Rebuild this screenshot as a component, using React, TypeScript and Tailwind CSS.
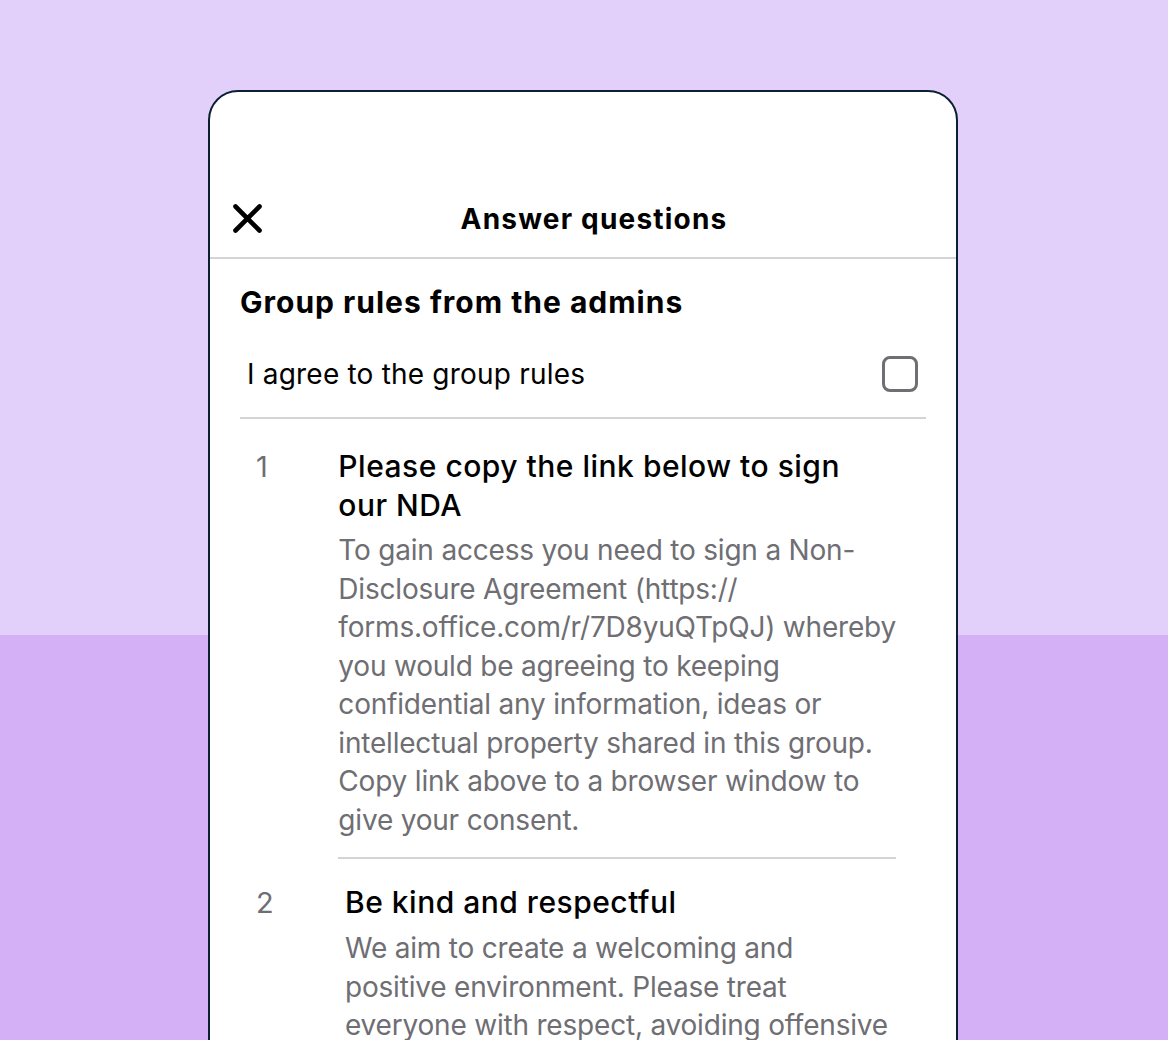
import React from "react";

const desc1 = [
  "To gain access you need to sign a Non-",
  "Disclosure Agreement (https://",
  "forms.office.com/r/7D8yuQTpQJ) whereby",
  "you would be agreeing to keeping",
  "confidential any information, ideas or",
  "intellectual property shared in this group.",
  "Copy link above to a browser window to",
  "give your consent.",
];

const desc2 = [
  "We aim to create a welcoming and",
  "positive environment. Please treat",
  "everyone with respect, avoiding offensive",
];

function Lines({ lines }: { lines: string[] }) {
  return (
    <>
      {lines.map((l, i) => (
        <span key={i} className="block whitespace-nowrap">
          {l}
        </span>
      ))}
    </>
  );
}

export default function App() {
  return (
    <div
      className="relative w-[1168px] h-[1040px] overflow-hidden flex flex-col"
      style={{ fontFamily: "Inter, 'Noto Sans', sans-serif" }}
    >
      <div className="h-[635px] bg-[#e3d0fa]" />
      <div className="flex-1 bg-[#d4b1f6]" />
      <div className="absolute left-[208px] top-[90px] w-[750px] h-[1000px] bg-white border-2 border-[#0c1f33] rounded-t-[30px] flex flex-col">
        <div className="h-[167px] flex flex-col justify-end border-b-2 border-[#d4d4d8] pb-[20px] relative">
          <div className="h-[36px] flex items-center relative">
            <div className="pl-[21px] flex items-center">
              <svg width="34" height="34" viewBox="0 0 34 34">
                <path d="M4.5 4.5 L28.5 28.5 M28.5 4.5 L4.5 28.5" stroke="#000" strokeWidth="4.6" strokeLinecap="round" />
              </svg>
            </div>
            <div className="absolute inset-0 flex items-center justify-center pl-[22px]">
              <span className="text-[28px] font-bold text-black leading-[36px] tracking-[1.2px]">Answer questions</span>
            </div>
          </div>
        </div>
        <div className="px-[30px]">
          <div className="pt-[25px] text-[30px] font-bold leading-[36px] text-black tracking-[1px]">Group rules from the admins</div>
          <div className="mt-[11px] flex items-center justify-between h-[88px] pl-[7px] pr-[8px] border-b-2 border-[#d4d4d8]">
            <span className="text-[28px] leading-[36px] text-black tracking-[0.2px]">I agree to the group rules</span>
            <div className="w-[36px] h-[36px] rounded-[8px] border-[3px] border-[#6e6e73]" />
          </div>
        </div>
        <div className="pl-[46px] pr-[60px] flex flex-col">
          <div className="flex pt-[28px]">
            <div className="w-[89px] text-[29px] leading-[39px] text-[#6e6e73]">1</div>
            <div className="flex-1">
              <div className="text-[30px] leading-[39px] text-black font-medium tracking-[0.5px]">
                <span className="block whitespace-nowrap">Please copy the link below to sign</span>
                <span className="block whitespace-nowrap">our NDA</span>
              </div>
              <div className="mt-[6px] text-[28px] leading-[38.5px] text-[#6e6e73] tracking-[-0.2px]">
                <Lines lines={desc1} />
              </div>
              <div className="mt-[18px] border-b-2 border-[#d4d4d8]" />
            </div>
          </div>
          <div className="flex pt-[24px]">
            <div className="w-[89px] text-[29px] leading-[39px] text-[#6e6e73]">2</div>
            <div className="flex-1">
              <div className="text-[30px] leading-[39px] text-black font-medium tracking-[0.5px]">
                <span className="block whitespace-nowrap">Be kind and respectful</span>
              </div>
              <div className="mt-[7px] text-[28px] leading-[38.5px] text-[#6e6e73] tracking-[-0.2px]">
                <Lines lines={desc2} />
              </div>
            </div>
          </div>
        </div>
      </div>
    </div>
  );
}
